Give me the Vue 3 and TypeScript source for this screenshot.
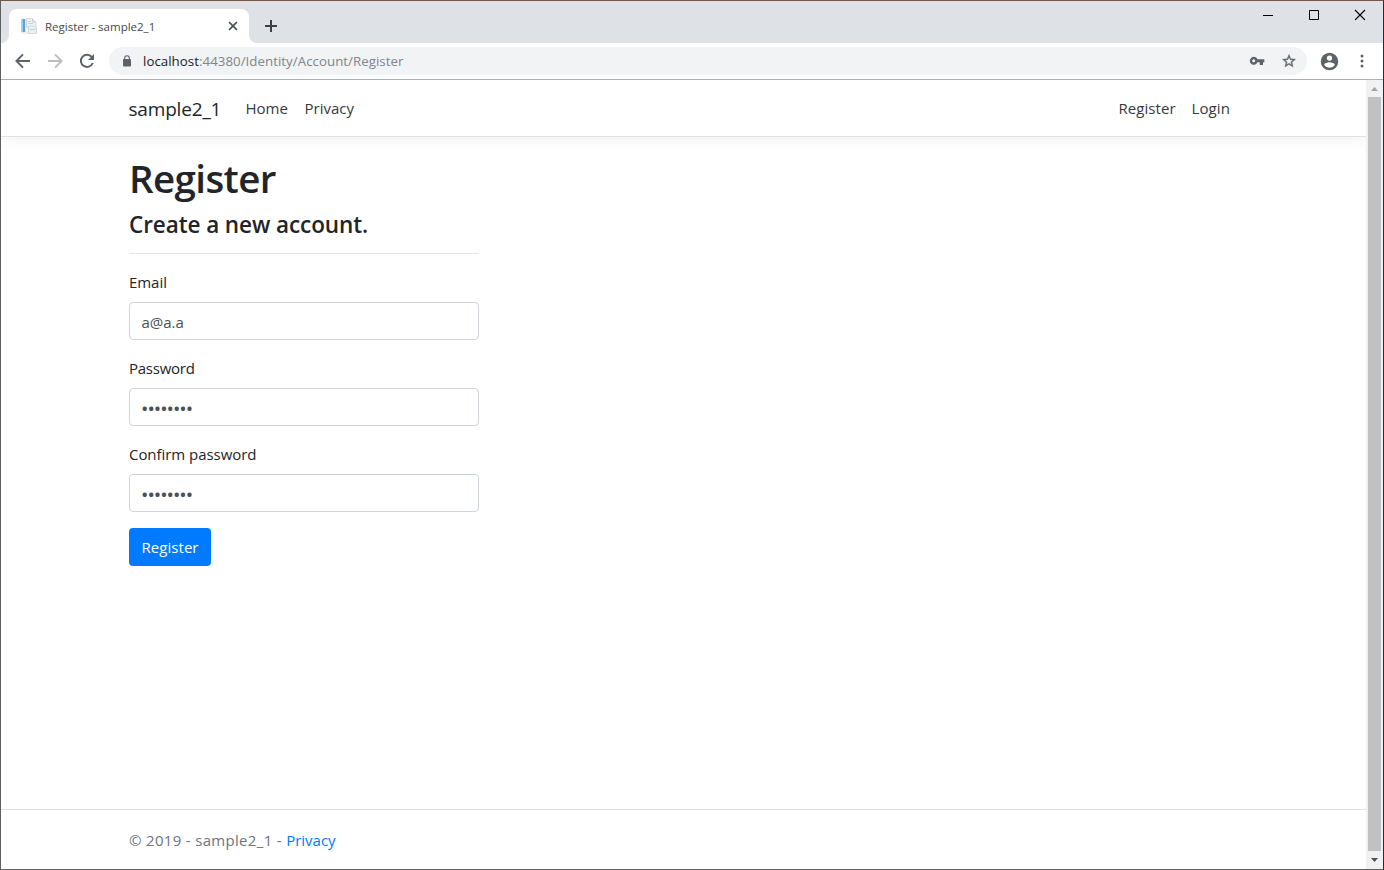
<script setup lang="ts">
import { ref } from 'vue'

interface Field {
  id: string
  label: string
  kind: 'email' | 'password'
  value: string
}

const siteName = 'sample2_1'
const fields = ref<Field[]>([
  { id: 'email', label: 'Email', kind: 'email', value: 'a@a.a' },
  { id: 'password', label: 'Password', kind: 'password', value: '••••••••' },
  { id: 'confirm', label: 'Confirm password', kind: 'password', value: '••••••••' },
])
</script>

<template>
  <div class="window">
    <div class="tabstrip">
      <svg width="8" height="8" viewBox="0 0 8 8"><path d="M8 0a8 8 0 0 1-8 8h8z" fill="#fff" /></svg>
      <div class="tab">
        <svg class="favicon" width="16" height="16" viewBox="0 0 16 16">
          <path d="M.5 1h9l2 2v12h-11z" fill="#f3f5f7" stroke="#dde2e7" stroke-width=".7" />
          <path d="M.5 1h3.700v13H.5z" fill="#58a8d5" />
          <path d="M.5 1h1.200v13H.5z" fill="#b9dcf0" />
          <path d="M5.500 .6h6L15 4v5H5.500z" fill="#f0f3f6" stroke="#ccd4db" stroke-width=".8" />
          <path d="M7.500 8h6l2 2v5.500h-8z" fill="#eceff2" stroke="#c8d0d8" stroke-width=".8" />
          <path d="M11.500.8V4H15M7 3.500h3M7 5.500h5M9 11.500h5" fill="none" stroke="#c8cfd6" />
        </svg>
        <span class="tab-title">Register - {{ siteName }}</span>
        <svg class="tab-close" width="10" height="10" viewBox="0 0 10 10">
          <path d="M1.100 1.100l7.800 7.800M8.900 1.100L1.100 8.900" stroke="#4b4f54" stroke-width="1.600" />
        </svg>
      </div>
      <svg width="8" height="8" viewBox="0 0 8 8"><path d="M0 0a8 8 0 0 0 8 8H0z" fill="#fff" /></svg>
      <svg class="new-tab" width="12" height="12" viewBox="0 0 12 12">
        <path d="M6 0v12M0 6h12" stroke="#3c4043" stroke-width="2" />
      </svg>
      <div class="caption">
        <svg width="46" height="28" viewBox="0 0 46 28"><path d="M18 14.500h10" stroke="#000" /></svg>
        <svg width="46" height="28" viewBox="0 0 46 28"><path d="M18.500 9.500h9v9h-9z" fill="none" stroke="#000" /></svg>
        <svg width="46" height="28" viewBox="0 0 46 28"><path d="M18 9l10 10M28 9L18 19" stroke="#000" stroke-width="1.100" /></svg>
      </div>
    </div>

    <div class="toolbar">
      <svg class="tool" width="32" height="24" viewBox="-4 0 32 24">
        <path d="M19 11H7.800l4.900-4.900L11.300 4.700 4 12l7.300 7.300 1.400-1.400L7.800 13H19z" fill="#5f6368" />
      </svg>
      <svg class="tool" width="32" height="24" viewBox="-4 0 32 24">
        <path d="M5 11h11.200l-4.900-4.900 1.400-1.400L20 12l-7.300 7.300-1.400-1.400 4.900-4.900H5z" fill="#bdbdbf" />
      </svg>
      <svg class="tool" width="32" height="24" viewBox="-4 0 32 24">
        <path d="M17 8.300A6.100 6.100 0 1 0 17.700 14" fill="none" stroke="#5f6368" stroke-width="2" />
        <path d="M19 5v6h-6z" fill="#5f6368" />
      </svg>
      <div class="omnibox">
        <svg class="lock" width="10" height="12" viewBox="0 0 10 12">
          <rect x="1" y="4" width="8" height="7.500" rx=".8" fill="#5f6368" />
          <path d="M2.700 5V3a2.300 2.300 0 0 1 4.600 0v2" fill="none" stroke="#5f6368" stroke-width="1.100" />
        </svg>
        <span class="url"><b>localhost</b>:44380/Identity/Account/Register</span>
        <svg class="key" width="16" height="16" viewBox="0 0 24 24">
          <path d="M12.700 9.500A6 6 0 1 0 12.700 14H16v4h5v-4h2V9.500zM7 14a2.300 2.300 0 1 1 0-4.600A2.300 2.300 0 0 1 7 14z" fill="#5f6368" />
        </svg>
        <svg class="star" width="16" height="16" viewBox="0 0 24 24">
          <path d="M22 9.240l-7.190-.62L12 2 9.190 8.630 2 9.240l5.460 4.730L5.820 21 12 17.270 18.180 21l-1.630-7.030zM12 15.400l-3.760 2.270 1-4.280-3.320-2.880 4.380-.38L12 6.100l1.710 4.040 4.380.38-3.320 2.880 1 4.280z" fill="#5f6368" stroke="#5f6368" stroke-width=".5" />
        </svg>
      </div>
      <svg class="avatar" viewBox="0 0 24 24">
        <path d="M12 2a10 10 0 1 0 0 20 10 10 0 0 0 0-20zm0 3a3 3 0 1 1 0 6 3 3 0 0 1 0-6zm0 14.200a7.200 7.200 0 0 1-6-3.220c.03-1.990 4-3.080 6-3.080s5.970 1.090 6 3.080a7.200 7.200 0 0 1-6 3.220z" fill="#5f6368" />
      </svg>
      <svg class="menu" width="4" height="14" viewBox="0 0 4 14" fill="#5f6368">
        <circle cx="2" cy="2" r="1.500" /><circle cx="2" cy="7" r="1.500" /><circle cx="2" cy="12" r="1.500" />
      </svg>
    </div>

    <div class="viewport">
      <div class="page">
        <header class="navbar">
          <a class="brand">{{ siteName }}</a>
          <a class="home">Home</a>
          <a class="privacy">Privacy</a>
          <nav class="account"><a class="reg">Register</a><a class="login">Login</a></nav>
        </header>
        <main>
          <h1>Register</h1>
          <form @submit.prevent>
            <h4>Create a new account.</h4>
            <hr />
            <div v-for="f in fields" :key="f.id" class="group">
              <label :for="f.id" :class="f.id">{{ f.label }}</label>
              <input :id="f.id" v-model="f.value" type="text" :class="f.kind" />
            </div>
            <button type="submit">Register</button>
          </form>
        </main>
        <footer><span>© 2019 - {{ siteName }} - </span><a>Privacy</a></footer>
      </div>
      <div class="scrollbar">
        <svg width="17" height="17" viewBox="0 0 17 17"><path d="M5 11l3.500-4 3.500 4z" fill="#a3a3a3" /></svg>
        <div class="thumb"></div>
        <svg width="17" height="18" viewBox="0 0 17 18"><path d="M5 7h7l-3.500 4z" fill="#505050" /></svg>
      </div>
    </div>
  </div>
</template>

<style>
html, body { overflow: hidden; }
</style>

<style scoped>
* { box-sizing: border-box; }
svg { display: block; flex: none; }
.window {
  width: 1384px; height: 870px; display: flex; flex-direction: column;
  border: 1px solid #606060; border-top-color: #795543; border-right-color: #292934;
  background: #fff; color: #212529;
  font: 400 15px/24px "Open Sans", "Noto Sans", sans-serif;
  white-space: nowrap;
}
.tabstrip { flex: none; height: 42px; background: #dee1e6; display: flex; align-items: flex-end; }
.tab {
  width: 240px; height: 34px; padding: 0 11px 0 12px;
  background: #fff; border-radius: 8px 8px 0 0; display: flex; align-items: center;
}
.tab-title { margin-left: 8px; padding-top: 1px; font-size: 11.500px; color: #45494d; flex: 1; }
.new-tab { margin: 0 0 11px 8px; }
.caption { margin-left: auto; display: flex; align-self: flex-start; }
.toolbar { flex: none; height: 37px; border-bottom: 1px solid #b0b1b3; display: flex; align-items: center; padding-left: 6px; }
.omnibox {
  width: 1198px; height: 28px; margin-left: 6px; border-radius: 14px; background: #f1f3f4;
  display: flex; align-items: center; padding: 0 10px 0 13px;
}
.url { margin-left: 11px; font-size: 13.300px; color: #80868b; letter-spacing: .03px; flex: 1; }
.url b { font-weight: inherit; color: #202124; }
.star { margin-left: 16px; }
.avatar { margin-left: 11.500px; width: 21px; height: 21px; }
.menu { margin-left: 20px; }
.viewport { flex: 1; min-height: 0; display: flex; }
.page { width: 1365px; display: flex; flex-direction: column; }
.navbar {
  flex: none; height: 57px; border-bottom: 1px solid #dee2e6; box-shadow: 0 4px 12px rgba(0, 0, 0, .05);
  display: flex; align-items: center; padding: 0 134.500px 0 127.500px; color: #343a40;
}
.brand { width: 117px; padding-top: 2px; font-size: 19px; letter-spacing: -.18px; color: #212529; }
.home { width: 59px; }
.account { margin-left: auto; display: flex; }
.reg { width: 73px; letter-spacing: .05px; }
.login { width: 40px; letter-spacing: .1px; }
main { flex: 1; padding: 16px 0 0 128px; }
h1 { margin: 0 0 8px; height: 48px; font-size: 38.500px; line-height: 51px; font-weight: 600; letter-spacing: -.6px; }
form { width: 350px; }
h4 { margin: 0; height: 28px; font-size: 22.500px; line-height: 31px; font-weight: 600; letter-spacing: -.08px; }
hr { margin: 16px 0; border: 0; border-top: 1px solid #e5e5e5; }
.group { margin-bottom: 16px; }
label { display: block; height: 24px; margin-bottom: 8px; letter-spacing: -.05px; }
label.password { letter-spacing: -.25px; }
input {
  display: block; width: 350px; height: 38px; padding: 2px 11.500px 0; border: 1px solid #ced4da; border-radius: 4px;
  background: #fff; color: #495057; font: inherit; outline: 0;
}
input.password { font-size: 17px; font-weight: 600; }
button {
  display: block; width: 82px; height: 38px; padding: 0; border: 0; border-radius: 4px; background: #007bff;
  color: #fff; font: inherit; letter-spacing: .05px;
}
footer { flex: none; height: 60px; border-top: 1px solid #dee2e6; padding: 18px 0 0 128px; color: #6c757d; white-space: pre; }
footer span { letter-spacing: .32px; }
footer a { color: #007bff; }
.scrollbar { width: 17px; background: #f1f1f1; display: flex; flex-direction: column; }
.thumb { flex: 1; width: 13px; margin-left: 2px; background: #c1c1c1; }
</style>
